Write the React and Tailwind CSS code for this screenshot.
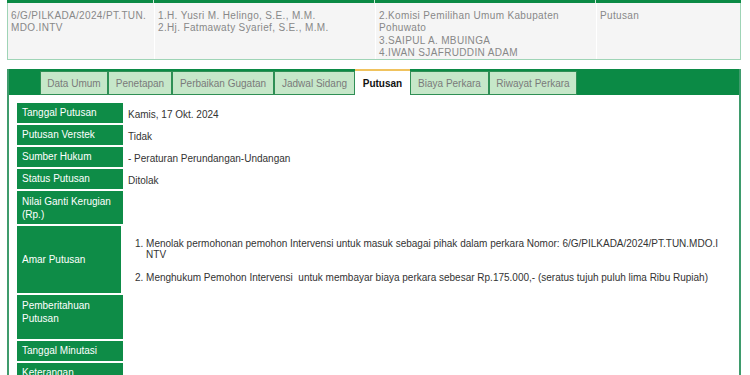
import React from 'react';

const parties = [
  '6/G/PILKADA/2024/PT.TUN.\nMDO.INTV',
  '1.H. Yusri M. Helingo, S.E., M.M.\n2.Hj. Fatmawaty Syarief, S.E., M.M.',
  '2.Komisi Pemilihan Umum Kabupaten\nPohuwato\n3.SAIPUL A. MBUINGA\n4.IWAN SJAFRUDDIN ADAM',
  'Putusan',
];

const colWidths = ['w-[146px]', 'w-[220px]', 'w-[220px]', 'flex-1'];

const tabs = [
  { label: 'Data Umum', w: 'w-[68px]' },
  { label: 'Penetapan', w: 'w-[64px]' },
  { label: 'Perbaikan Gugatan', w: 'w-[102px]' },
  { label: 'Jadwal Sidang', w: 'w-[81px]' },
  { label: 'Putusan', w: 'w-[55px]', active: true },
  { label: 'Biaya Perkara', w: 'w-[79px]' },
  { label: 'Riwayat Perkara', w: 'w-[88px]' },
];

const Row = ({ label, h, align = 'center', children }) => (
  <div className="flex">
    <div
      className={`w-[106px] ${h} bg-[#0e8c47] text-white border-b-2 border-white px-[5px] flex ${
        align === 'center' ? 'items-center leading-[12px]' : 'items-start pt-[5px] leading-[12.5px]'
      }`}
    >
      <span>{label}</span>
    </div>
    <div className={`flex-1 ${h} px-[5px] ${align === 'center' ? 'flex items-center' : ''}`}>{children}</div>
  </div>
);

const App = () => {
  return (
    <div
      className="w-[750px] h-[375px] overflow-hidden bg-white text-[10px]"
      style={{ fontFamily: '"Liberation Sans", Arial, sans-serif' }}
    >
      {/* Parties table */}
      <div className="ml-[7px] w-[734px]">
        <div className="flex h-[3px] gap-px bg-[#cfe9d9]">
          {colWidths.map((w, i) => (
            <div key={i} className={`${w} bg-[#0b8a45]`} />
          ))}
        </div>
        <div className="flex h-[57px] bg-white border border-t-0 border-[#9fd4b6] gap-px">
          {parties.map((text, i) => (
            <div
              key={i}
              className={`${colWidths[i]} bg-[#f5f5f5] px-[3px] pt-[7px] text-[#888] leading-[12.4px] whitespace-pre-line tracking-[0.35px]`}
            >
              {text}
            </div>
          ))}
        </div>
      </div>

      {/* Detail panel */}
      <div className="mt-[9px] ml-[7px] w-[734px] border-x-2 border-[#3f9b6c] h-[320px]">
        <div className="flex h-[26px] bg-[#0b8a45]">
          <div className="w-[31px]" />
          {tabs.map((t) =>
            t.active ? (
              <div
                key={t.label}
                className={`${t.w} bg-white border-t-2 border-[#f0c35e] flex items-center justify-center font-bold text-[#111]`}
              >
                {t.label}
              </div>
            ) : (
              <div
                key={t.label}
                className={`${t.w} mt-[2px] bg-[#c6e7c9] border border-[#2f8f55] flex items-center justify-center text-[#7a7a7a]`}
              >
                {t.label}
              </div>
            )
          )}
        </div>

        <div className="pt-[8px] pl-[8px] pr-[16px] text-[#333]">
          <Row label="Tanggal Putusan" h="h-[22px]">Kamis, 17 Okt. 2024</Row>
          <Row label="Putusan Verstek" h="h-[22px]">Tidak</Row>
          <Row label="Sumber Hukum" h="h-[22px]">- Peraturan Perundangan-Undangan</Row>
          <Row label="Status Putusan" h="h-[22px]">Ditolak</Row>
          <Row label="Nilai Ganti Kerugian (Rp.)" h="h-[35px]" align="top" />
          <Row label="Amar Putusan" h="h-[69px]">
            <div className="pl-[9px] leading-[11px] w-full">
              <div className="flex">
                <span className="w-[11px] shrink-0">1.</span>
                <span className="whitespace-nowrap">
                  Menolak permohonan pemohon Intervensi untuk masuk sebagai pihak dalam perkara Nomor: 6/G/PILKADA/2024/PT.TUN.MDO.I
                  <br />
                  NTV
                </span>
              </div>
              <div className="flex mt-[12px]">
                <span className="w-[11px] shrink-0">2.</span>
                <span className="whitespace-nowrap">
                  Menghukum Pemohon Intervensi&nbsp; untuk membayar biaya perkara sebesar Rp.175.000,- (seratus tujuh puluh lima Ribu Rupiah)
                </span>
              </div>
            </div>
          </Row>
          <Row label="Pemberitahuan Putusan" h="h-[46px]" align="top" />
          <Row label="Tanggal Minutasi" h="h-[22px]" />
          <Row label="Keterangan" h="h-[22px]" />
        </div>
      </div>
    </div>
  );
};

export default App;
